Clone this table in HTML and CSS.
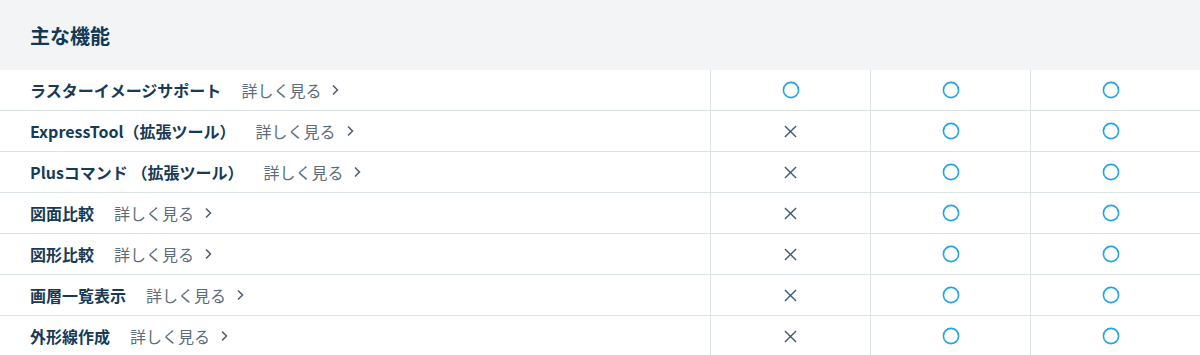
FILE: index.html
```html
<!DOCTYPE html>
<html lang="ja">
<head>
<meta charset="utf-8">
<link rel="stylesheet" href="styles.css">
</head>
<body>
<section class="features">
  <div class="head"><h2 class="title">主な機能</h2></div>
  <div class="row">
    <div class="name"><span class="label">ラスターイメージサポート</span><a class="more">詳しく見る<svg class="chev" viewBox="0 0 8 12" width="8" height="12"><path d="M2 1.5 L6.5 6 L2 10.5"/></svg></a></div>
    <div class="cell"><svg class="yes" viewBox="0 0 18 18" width="18" height="18"><circle cx="9" cy="9" r="7.6"/></svg></div>
    <div class="cell"><svg class="yes" viewBox="0 0 18 18" width="18" height="18"><circle cx="9" cy="9" r="7.6"/></svg></div>
    <div class="cell"><svg class="yes" viewBox="0 0 18 18" width="18" height="18"><circle cx="9" cy="9" r="7.6"/></svg></div>
  </div>
  <div class="row">
    <div class="name"><span class="label">ExpressTool（拡張ツール）</span><a class="more">詳しく見る<svg class="chev" viewBox="0 0 8 12" width="8" height="12"><path d="M2 1.5 L6.5 6 L2 10.5"/></svg></a></div>
    <div class="cell"><svg class="no" viewBox="0 0 14 14" width="14" height="14"><path d="M1 1 L13 13 M13 1 L1 13"/></svg></div>
    <div class="cell"><svg class="yes" viewBox="0 0 18 18" width="18" height="18"><circle cx="9" cy="9" r="7.6"/></svg></div>
    <div class="cell"><svg class="yes" viewBox="0 0 18 18" width="18" height="18"><circle cx="9" cy="9" r="7.6"/></svg></div>
  </div>
  <div class="row">
    <div class="name"><span class="label">Plusコマンド （拡張ツール）</span><a class="more">詳しく見る<svg class="chev" viewBox="0 0 8 12" width="8" height="12"><path d="M2 1.5 L6.5 6 L2 10.5"/></svg></a></div>
    <div class="cell"><svg class="no" viewBox="0 0 14 14" width="14" height="14"><path d="M1 1 L13 13 M13 1 L1 13"/></svg></div>
    <div class="cell"><svg class="yes" viewBox="0 0 18 18" width="18" height="18"><circle cx="9" cy="9" r="7.6"/></svg></div>
    <div class="cell"><svg class="yes" viewBox="0 0 18 18" width="18" height="18"><circle cx="9" cy="9" r="7.6"/></svg></div>
  </div>
  <div class="row">
    <div class="name"><span class="label">図面比較</span><a class="more">詳しく見る<svg class="chev" viewBox="0 0 8 12" width="8" height="12"><path d="M2 1.5 L6.5 6 L2 10.5"/></svg></a></div>
    <div class="cell"><svg class="no" viewBox="0 0 14 14" width="14" height="14"><path d="M1 1 L13 13 M13 1 L1 13"/></svg></div>
    <div class="cell"><svg class="yes" viewBox="0 0 18 18" width="18" height="18"><circle cx="9" cy="9" r="7.6"/></svg></div>
    <div class="cell"><svg class="yes" viewBox="0 0 18 18" width="18" height="18"><circle cx="9" cy="9" r="7.6"/></svg></div>
  </div>
  <div class="row">
    <div class="name"><span class="label">図形比較</span><a class="more">詳しく見る<svg class="chev" viewBox="0 0 8 12" width="8" height="12"><path d="M2 1.5 L6.5 6 L2 10.5"/></svg></a></div>
    <div class="cell"><svg class="no" viewBox="0 0 14 14" width="14" height="14"><path d="M1 1 L13 13 M13 1 L1 13"/></svg></div>
    <div class="cell"><svg class="yes" viewBox="0 0 18 18" width="18" height="18"><circle cx="9" cy="9" r="7.6"/></svg></div>
    <div class="cell"><svg class="yes" viewBox="0 0 18 18" width="18" height="18"><circle cx="9" cy="9" r="7.6"/></svg></div>
  </div>
  <div class="row">
    <div class="name"><span class="label">画層一覧表示</span><a class="more">詳しく見る<svg class="chev" viewBox="0 0 8 12" width="8" height="12"><path d="M2 1.5 L6.5 6 L2 10.5"/></svg></a></div>
    <div class="cell"><svg class="no" viewBox="0 0 14 14" width="14" height="14"><path d="M1 1 L13 13 M13 1 L1 13"/></svg></div>
    <div class="cell"><svg class="yes" viewBox="0 0 18 18" width="18" height="18"><circle cx="9" cy="9" r="7.6"/></svg></div>
    <div class="cell"><svg class="yes" viewBox="0 0 18 18" width="18" height="18"><circle cx="9" cy="9" r="7.6"/></svg></div>
  </div>
  <div class="row">
    <div class="name"><span class="label">外形線作成</span><a class="more">詳しく見る<svg class="chev" viewBox="0 0 8 12" width="8" height="12"><path d="M2 1.5 L6.5 6 L2 10.5"/></svg></a></div>
    <div class="cell"><svg class="no" viewBox="0 0 14 14" width="14" height="14"><path d="M1 1 L13 13 M13 1 L1 13"/></svg></div>
    <div class="cell"><svg class="yes" viewBox="0 0 18 18" width="18" height="18"><circle cx="9" cy="9" r="7.6"/></svg></div>
    <div class="cell"><svg class="yes" viewBox="0 0 18 18" width="18" height="18"><circle cx="9" cy="9" r="7.6"/></svg></div>
  </div>
</section>
</body>
</html>
```
FILE: styles.css
```css
* { box-sizing: border-box; }
html, body { margin: 0; padding: 0; background: #fff; }
body {
  font-family: "Noto Sans CJK JP", "Noto Sans", sans-serif;
  width: 1200px;
}
.features { width: 1200px; }
.head {
  height: 70px;
  background: #f2f4f6;
  display: flex;
  align-items: center;
  padding-left: 30px;
}
.title {
  margin: 0;
  font-size: 20px;
  font-weight: 700;
  color: #123a57;
  line-height: 1;
  padding-top: 2px;
}
.row {
  display: grid;
  grid-template-columns: 710px 160px 160px 160px;
  height: 41px;
  border-bottom: 1px solid #dde4e6;
}
.name {
  display: flex;
  align-items: center;
  padding-left: 30px;
}
.label {
  font-size: 16px;
  font-weight: 700;
  color: #173a55;
  margin-right: 20px;
}
.more {
  display: inline-flex;
  align-items: center;
  font-size: 16px;
  color: #5b6d7c;
  text-decoration: none;
}
.chev {
  margin-left: 10px;
  fill: none;
  stroke: #4a5e6e;
  stroke-width: 1.5;
}
.cell {
  border-left: 1px solid #dde4e6;
  display: flex;
  align-items: center;
  justify-content: center;
}
.yes {
  fill: none;
  stroke: #22a4e4;
  stroke-width: 1.6;
}
.no {
  fill: none;
  stroke: #3d5b73;
  stroke-width: 1.5;
  width: 13px;
  height: 13px;
}
```
